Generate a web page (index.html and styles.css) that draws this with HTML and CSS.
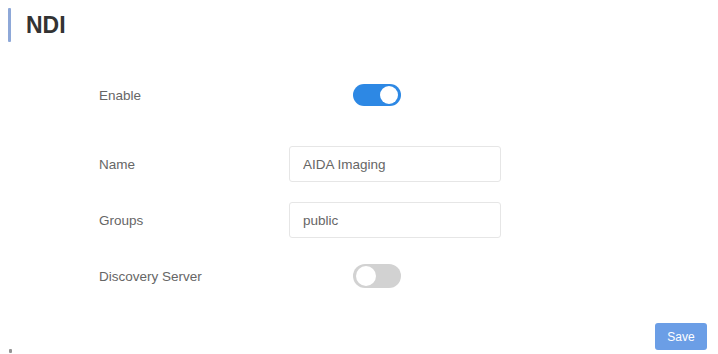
FILE: index.html
```html
<!DOCTYPE html>
<html>
<head>
<meta charset="utf-8">
<link rel="stylesheet" href="styles.css">
</head>
<body>
<div class="page">
  <div class="header">
    <span class="bar"></span>
    <h1 class="title">NDI</h1>
  </div>
  <div class="form">
    <div class="row row-first">
      <div class="label">Enable</div>
      <div class="control"><span class="switch on"><span class="knob"></span></span></div>
    </div>
    <div class="row">
      <div class="label">Name</div>
      <div class="control"><input class="input" type="text" value="AIDA Imaging"></div>
    </div>
    <div class="row">
      <div class="label">Groups</div>
      <div class="control"><input class="input" type="text" value="public"></div>
    </div>
    <div class="row">
      <div class="label">Discovery Server</div>
      <div class="control"><span class="switch off"><span class="knob"></span></span></div>
    </div>
  </div>
  <div class="footer">
    <button class="save">Save</button>
  </div>
  <span class="corner-dot"></span>
</div>
</body>
</html>
```
FILE: styles.css
```css
* { box-sizing: border-box; }
html, body { margin: 0; padding: 0; background: #fff; }
body { font-family: "Liberation Sans", Arial, sans-serif; color: #666; }
.page { position: relative; width: 718px; height: 354px; overflow: hidden; }

.header { display: flex; align-items: center; padding: 8px 0 0 8px; height: 42px; }
.bar { width: 3px; height: 34px; background: #8ea8d8; border-radius: 1px; }
.title { margin: 0 0 0 15px; font-size: 23px; font-weight: bold; color: #333; line-height: 34px; }

.form { padding-left: 99px; padding-top: 35px; }
.row { display: flex; align-items: center; height: 36px; margin-top: 20px; }
.row-first { margin-top: 0; margin-bottom: 33px; }
.label { width: 190px; font-size: 13.5px; color: #666; }
.control { display: flex; align-items: center; }

.input {
  width: 212px; height: 36px; border: 1px solid #e6e6e6; border-radius: 3px;
  padding: 0 13px; font-family: "Liberation Sans", Arial, sans-serif; font-size: 13.5px; color: #666;
  background: #fff; outline: none;
}

.switch { position: relative; display: block; width: 48px; height: 22px; border-radius: 11px; margin-left: 64px; }
.switch.on { background: #2d88e4; }
.switch.off { background: #d2d2d2; height: 24px; border-radius: 12px; }
.knob { position: absolute; top: 2px; width: 18px; height: 18px; border-radius: 50%; background: #fff; }
.switch.on .knob { right: 3px; }
.switch.off .knob { left: 3px; top: 2px; width: 20px; height: 20px; }

.footer { display: flex; justify-content: flex-end; padding-right: 11px; margin-top: 29px; }
.save {
  width: 52px; height: 27px; border: none; border-radius: 3px; background: #6b9ee6;
  color: #fff; font-family: "Liberation Sans", Arial, sans-serif; font-size: 12px; padding: 0;
}

.corner-dot { position: absolute; left: 9px; top: 349px; width: 3px; height: 4px; background: #666; border-radius: 1px; opacity: 0.7; }
```
